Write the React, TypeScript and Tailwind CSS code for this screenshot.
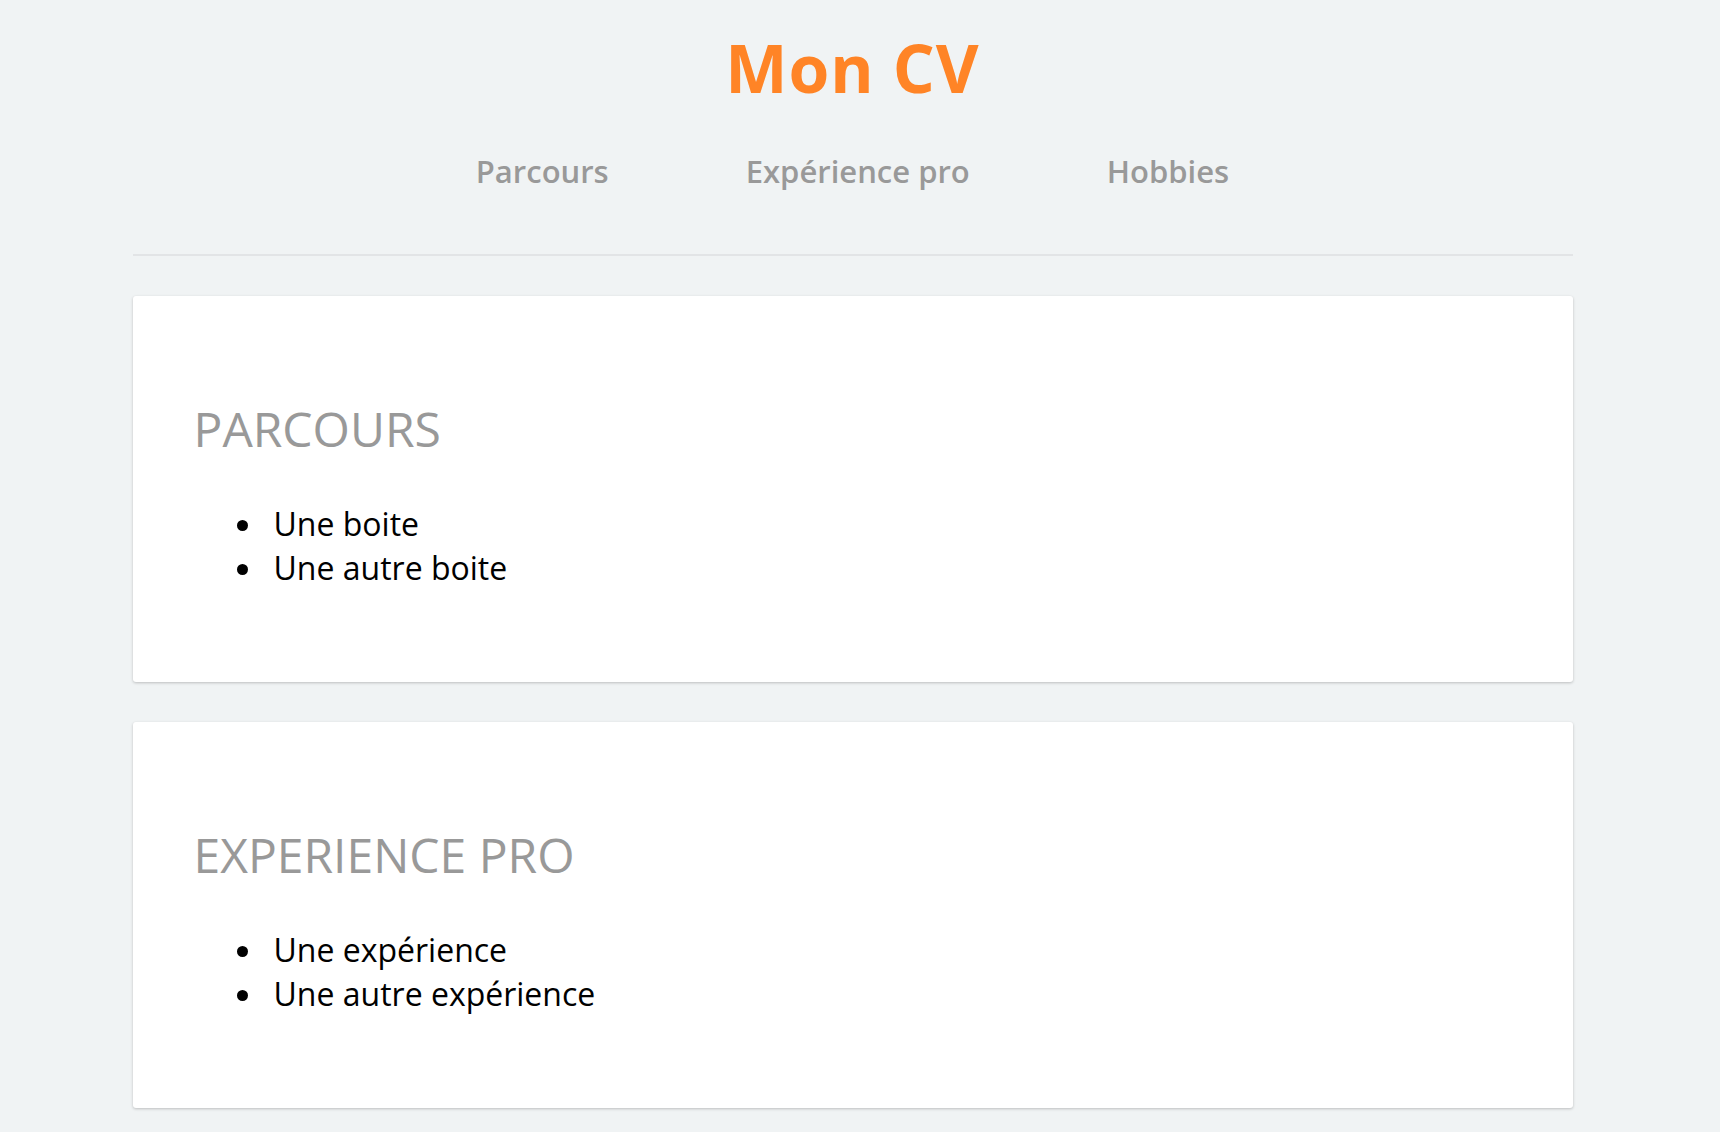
import React from "react";

const sections = [
  { title: "PARCOURS", items: ["Une boite", "Une autre boite"] },
  { title: "EXPERIENCE PRO", items: ["Une expérience", "Une autre expérience"] },
];

export default function App() {
  return (
    <div className="min-h-[1132px] w-full bg-[#f0f3f4]" style={{ fontFamily: '"Open Sans", sans-serif' }}>
      <div className="w-[1705px]">
        <div className="mx-auto w-[1440px]">
          <header className="pt-[27px]">
            <h1 className="text-center text-[66px] font-bold leading-[80px] tracking-[1px] text-[#ff8426]">
              Mon CV
            </h1>
            <nav className="mt-[44px] flex justify-center gap-[137px] text-[31px] font-semibold leading-[40px] text-[#999999]">
              <a>Parcours</a>
              <a>Expérience pro</a>
              <a>Hobbies</a>
            </nav>
          </header>
          <div className="mt-[63px] h-[2px] bg-[#e2e4e6]" />
          <main className="mt-[40px] flex flex-col gap-[40px]">
            {sections.map((s) => (
              <section
                key={s.title}
                className="h-[386px] rounded-[3px] bg-white pl-[61px] pt-[105px] shadow-[0_1px_3px_rgba(0,0,0,0.22)]"
              >
                <h2 className="text-[48px] leading-[56px] text-[#999999]">{s.title}</h2>
                <ul className="mt-[45px] text-[32px] leading-[44px] text-black">
                  {s.items.map((it) => (
                    <li key={it} className="flex items-center">
                      <span className="ml-[43px] mr-[26px] mt-[2px] h-[11px] w-[11px] rounded-full bg-black" />
                      <span>{it}</span>
                    </li>
                  ))}
                </ul>
              </section>
            ))}
          </main>
        </div>
      </div>
    </div>
  );
}
